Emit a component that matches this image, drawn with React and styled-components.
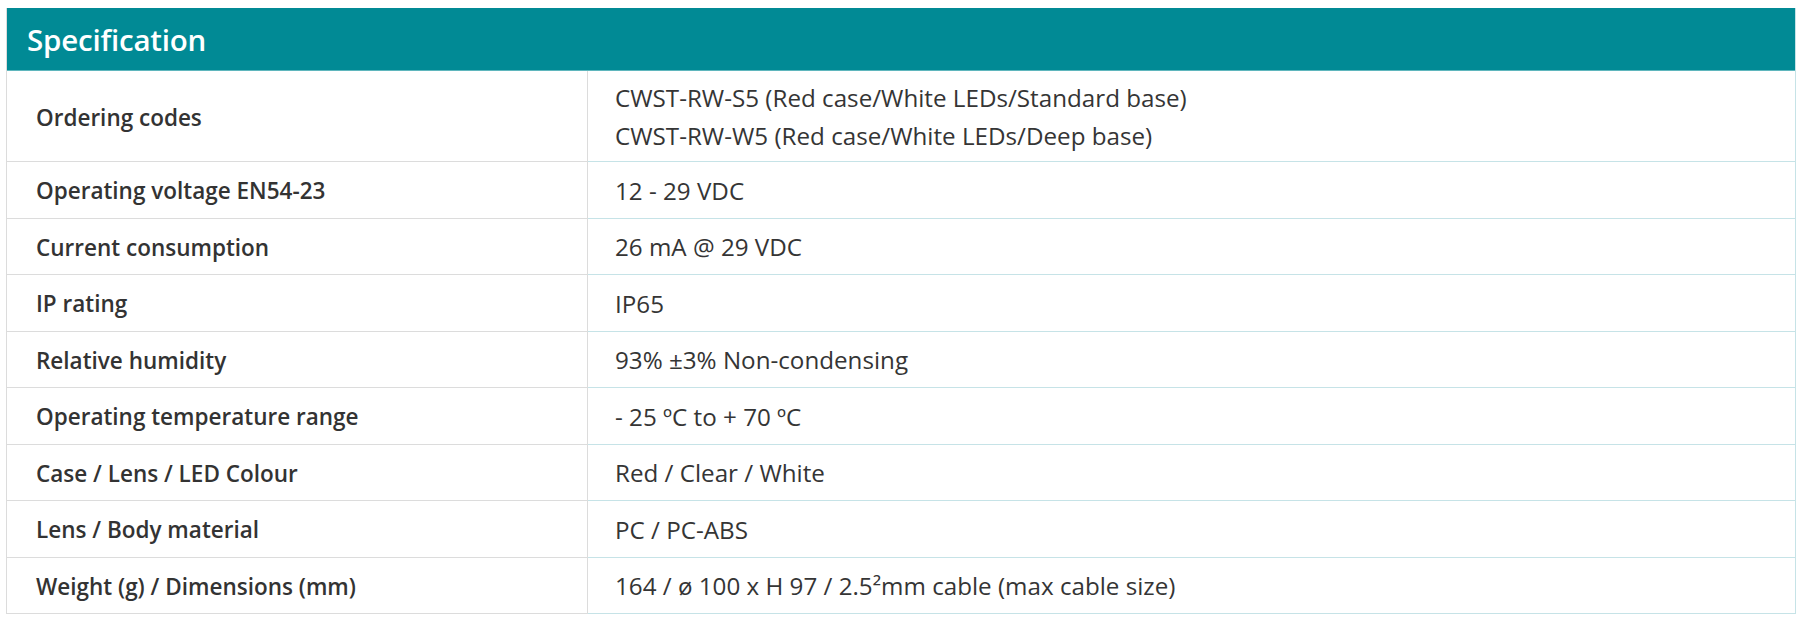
import styled, { createGlobalStyle } from 'styled-components';

const GlobalStyle = createGlobalStyle`
  body {
    margin: 0;
    padding: 8px 7px 0 6px;
    background: #fff;
    font-family: "Open Sans", "Noto Sans", sans-serif;
  }
`;

const Table = styled.section`
  display: flex;
  flex-direction: column;
  border-right: 1px solid #c6e3e7;
  border-left: 1px solid #dcdcdc;
`;

const Header = styled.h2`
  margin: 0;
  height: 62px;
  display: flex;
  align-items: center;
  padding-left: 20px;
  background: #018a95;
  border-bottom: 1px solid #5fb6bd;
  color: #fff;
  font-size: 29.5px;
  font-weight: 600;
  letter-spacing: -0.2px;
`;

const Row = styled.div`
  display: grid;
  grid-template-columns: 581px 1fr;
  height: ${(p) => p.$height}px;
`;

const Label = styled.div`
  display: flex;
  align-items: center;
  padding: 2px 0 0 29px;
  border-right: 1px solid #dcdcdc;
  border-bottom: 1px solid #dcdcdc;
  color: #333;
  font-size: 22.5px;
  font-weight: 650;
`;

const Value = styled.div`
  display: flex;
  flex-direction: column;
  justify-content: center;
  padding: 2px 0 0 27px;
  border-bottom: 1px solid #c6e3e7;
  color: #353535;
  font-size: 24.2px;
  font-weight: 500;
  line-height: 38px;
`;

const specs = [
  { label: 'Ordering codes', values: ['CWST-RW-S5 (Red case/White LEDs/Standard base)', 'CWST-RW-W5 (Red case/White LEDs/Deep base)'] },
  { label: 'Operating voltage EN54-23', values: ['12 - 29 VDC'] },
  { label: 'Current consumption', values: ['26 mA @ 29 VDC'] },
  { label: 'IP rating', values: ['IP65'] },
  { label: 'Relative humidity', values: ['93% ±3% Non-condensing'] },
  { label: 'Operating temperature range', values: ['- 25 ºC to + 70 ºC'] },
  { label: 'Case / Lens / LED Colour', values: ['Red / Clear / White'] },
  { label: 'Lens / Body material', values: ['PC / PC-ABS'] },
  { label: 'Weight (g) / Dimensions (mm)', values: ['164 / ø 100 x H 97 / 2.5²mm cable (max cable size)'] },
];

export default function App() {
  return (
    <>
      <GlobalStyle />
      <Table>
        <Header>Specification</Header>
        {specs.map((spec, i) => (
          <Row key={spec.label} $height={i === 0 ? 91 : 56.5}>
            <Label>{spec.label}</Label>
            <Value>
              {spec.values.map((v) => (
                <span key={v}>{v}</span>
              ))}
            </Value>
          </Row>
        ))}
      </Table>
    </>
  );
}
